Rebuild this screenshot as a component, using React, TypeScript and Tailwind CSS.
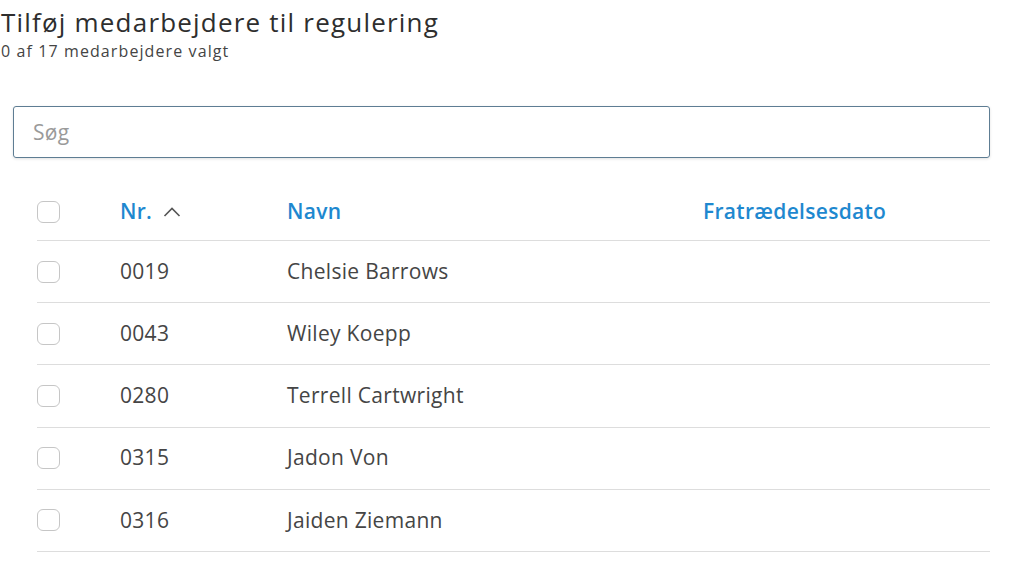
import React, { useState } from 'react';

interface Employee {
  nr: string;
  name: string;
  endDate?: string;
}

const employees: Employee[] = [
  { nr: '0019', name: 'Chelsie Barrows' },
  { nr: '0043', name: 'Wiley Koepp' },
  { nr: '0280', name: 'Terrell Cartwright' },
  { nr: '0315', name: 'Jadon Von' },
  { nr: '0316', name: 'Jaiden Ziemann' },
];

const Checkbox: React.FC<{ checked: boolean; onChange: () => void }> = ({ checked, onChange }) => (
  <button
    type="button"
    onClick={onChange}
    className={`w-[23px] h-[22px] rounded-[6px] border-[1.5px] ${checked ? 'bg-[#1e88cf] border-[#1e88cf]' : 'bg-white border-[#c6c6c6]'}`}
  />
);

const App: React.FC = () => {
  const [query, setQuery] = useState('');
  const [selected, setSelected] = useState<string[]>([]);

  const toggle = (nr: string) =>
    setSelected((s) => (s.includes(nr) ? s.filter((x) => x !== nr) : [...s, nr]));

  return (
    <div className="min-h-screen bg-white text-[#333] font-['Open_Sans',sans-serif] pt-[6px]">
      <h1 className="text-[26px] leading-[32px] tracking-[1.2px] text-[#2e2e2e] pl-[1px]">Tilføj medarbejdere til regulering</h1>
      <p className="mt-[4px] text-[16px] leading-[18px] tracking-[1.1px] text-[#444] pl-[1px]">0 af 17 medarbejdere valgt</p>

      <div className="mt-[46px] ml-[13px] w-[977px]">
        <input
          autoFocus
          value={query}
          onChange={(e) => setQuery(e.target.value)}
          placeholder="Søg"
          className="w-full h-[52px] rounded-[3px] border border-[#5e7d93] px-[19px] text-[21px] tracking-[0.3px] text-[#333] placeholder:text-[#9a9a9a] outline-none shadow-[0_1px_3px_rgba(0,0,0,0.12)]"
        />
      </div>

      <div className="ml-[37px] w-[953px] mt-[26px]">
        <div className="flex items-center h-[57px] border-b border-[#ddd] text-[21px] tracking-[0.3px] font-semibold text-[#1e88cf]">
          <div className="w-[83px] flex items-center">
            <Checkbox checked={false} onChange={() => {}} />
          </div>
          <div className="w-[167px] flex items-center gap-[11px]">
            Nr.
            <svg width="18" height="10" viewBox="0 0 18 10" fill="none" stroke="#555" strokeWidth="1.6">
              <path d="M1.5 9 L9 1.5 L16.5 9" />
            </svg>
          </div>
          <div className="w-[416px]">Navn</div>
          <div>Fratrædelsesdato</div>
        </div>

        {employees.map((e) => (
          <div key={e.nr} className="flex items-center h-[62.2px] border-b border-[#ddd] text-[21px] tracking-[0.3px] text-[#454545]">
            <div className="w-[83px] flex items-center">
              <Checkbox checked={selected.includes(e.nr)} onChange={() => toggle(e.nr)} />
            </div>
            <div className="w-[167px]">{e.nr}</div>
            <div className="w-[416px]">{e.name}</div>
            <div>{e.endDate}</div>
          </div>
        ))}
      </div>
    </div>
  );
};

export default App;
